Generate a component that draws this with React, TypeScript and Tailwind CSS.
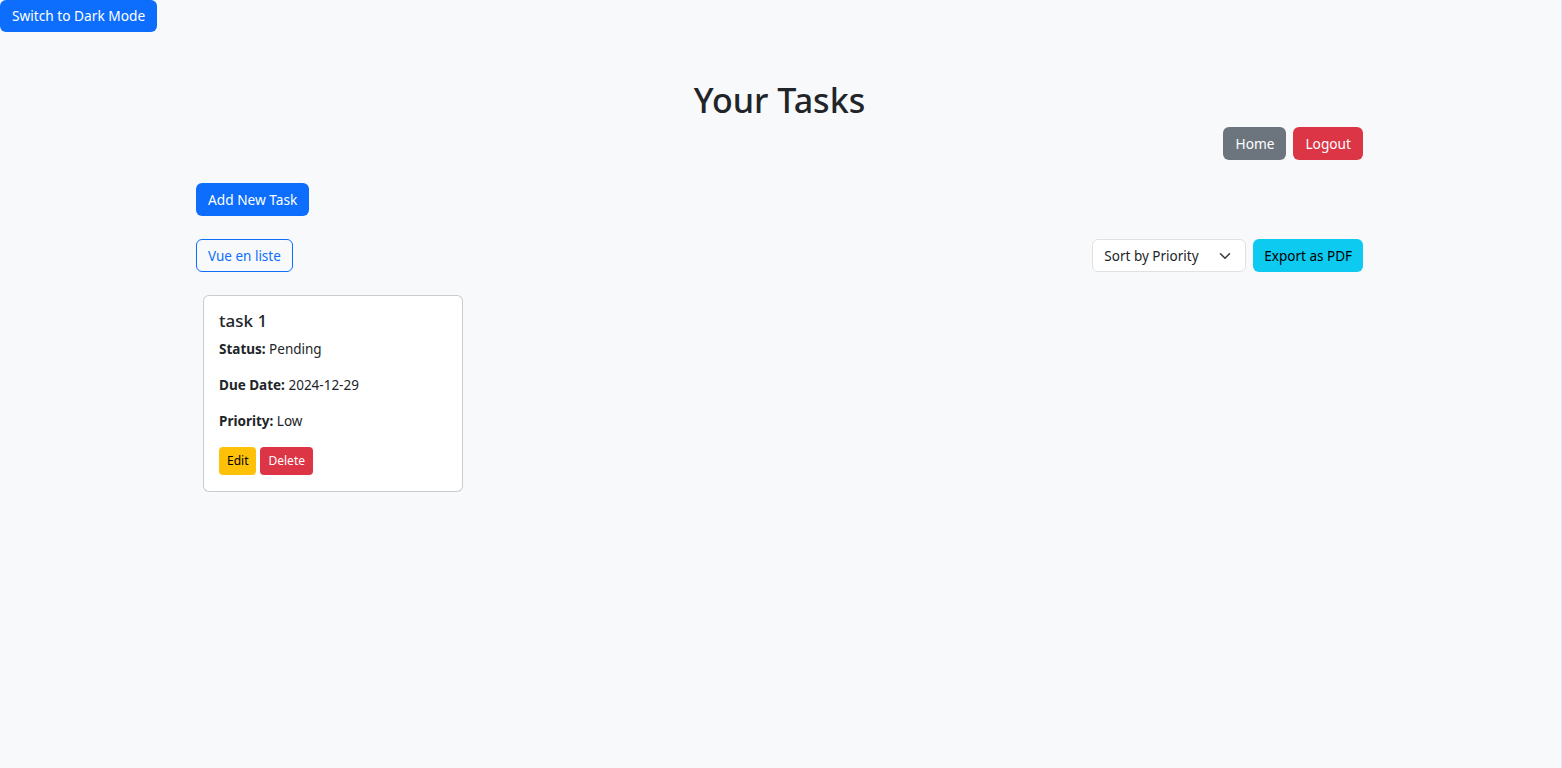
import React from 'react';

const App: React.FC = () => (
    <div className="min-h-screen bg-[#f8f9fa] text-[#212529] font-['Noto_Sans',sans-serif] border-r border-[#e3e3e3]">
        <button className="h-[32px] px-3 pt-px bg-[#0d6efd] text-white text-[13.7px] rounded-md">Switch to Dark Mode</button>

        <div className="ml-[196px] w-[1167px]">
            <h1 className="mt-[46px] text-center text-[34px] leading-[44px] font-medium">Your Tasks</h1>

            <div className="flex justify-end gap-[7px] mt-[5px]">
                <button className="h-[33px] px-3 pt-px bg-[#6c757d] text-white text-[13.7px] rounded-md">Home</button>
                <button className="h-[33px] px-3 pt-px bg-[#dc3545] text-white text-[13.7px] rounded-md">Logout</button>
            </div>

            <div className="mt-[23px]">
                <button className="h-[33px] px-3 pt-px bg-[#0d6efd] text-white text-[13.7px] rounded-md">Add New Task</button>
            </div>

            <div className="flex items-center justify-between mt-[23px]">
                <button className="h-[33px] px-[11px] pt-px border border-[#0d6efd] text-[#0d6efd] text-[13.5px] rounded-md">Vue en liste</button>
                <div className="flex gap-[7px]">
                    <div className="w-[154px] h-[33px] flex items-center justify-between pl-[11px] pr-[14px] pt-px bg-white border border-[#dee2e6] rounded-md text-[13.5px]">
                        <span>Sort by Priority</span>
                        <svg width="12" height="12" viewBox="0 0 16 16" fill="none" stroke="#343a40" strokeWidth="2" strokeLinecap="round" strokeLinejoin="round">
                            <path d="M2 5l6 6 6-6" />
                        </svg>
                    </div>
                    <button className="h-[33px] px-[11px] pt-px bg-[#0dcaf0] text-black text-[13.5px] rounded-md">Export as PDF</button>
                </div>
            </div>

            <div className="mt-[23px] ml-[7px] w-[260px] bg-white border border-black/20 rounded-md px-[15px] pt-[14px] pb-4 text-[13.5px]">
                <h5 className="text-[17px] leading-[21px] font-medium mb-[8px]">task 1</h5>
                <p className="leading-[21px] mb-[15px]"><strong>Status:</strong> Pending</p>
                <p className="leading-[21px] mb-[15px]"><strong>Due Date:</strong> 2024-12-29</p>
                <p className="leading-[21px] mb-[15px]"><strong>Priority:</strong> Low</p>
                <div className="flex gap-[4px]">
                    <button className="h-[28px] px-2 bg-[#ffc107] text-black text-[12px] rounded">Edit</button>
                    <button className="h-[28px] px-2 bg-[#dc3545] text-white text-[12px] rounded">Delete</button>
                </div>
            </div>
        </div>
    </div>
);

export default App;
